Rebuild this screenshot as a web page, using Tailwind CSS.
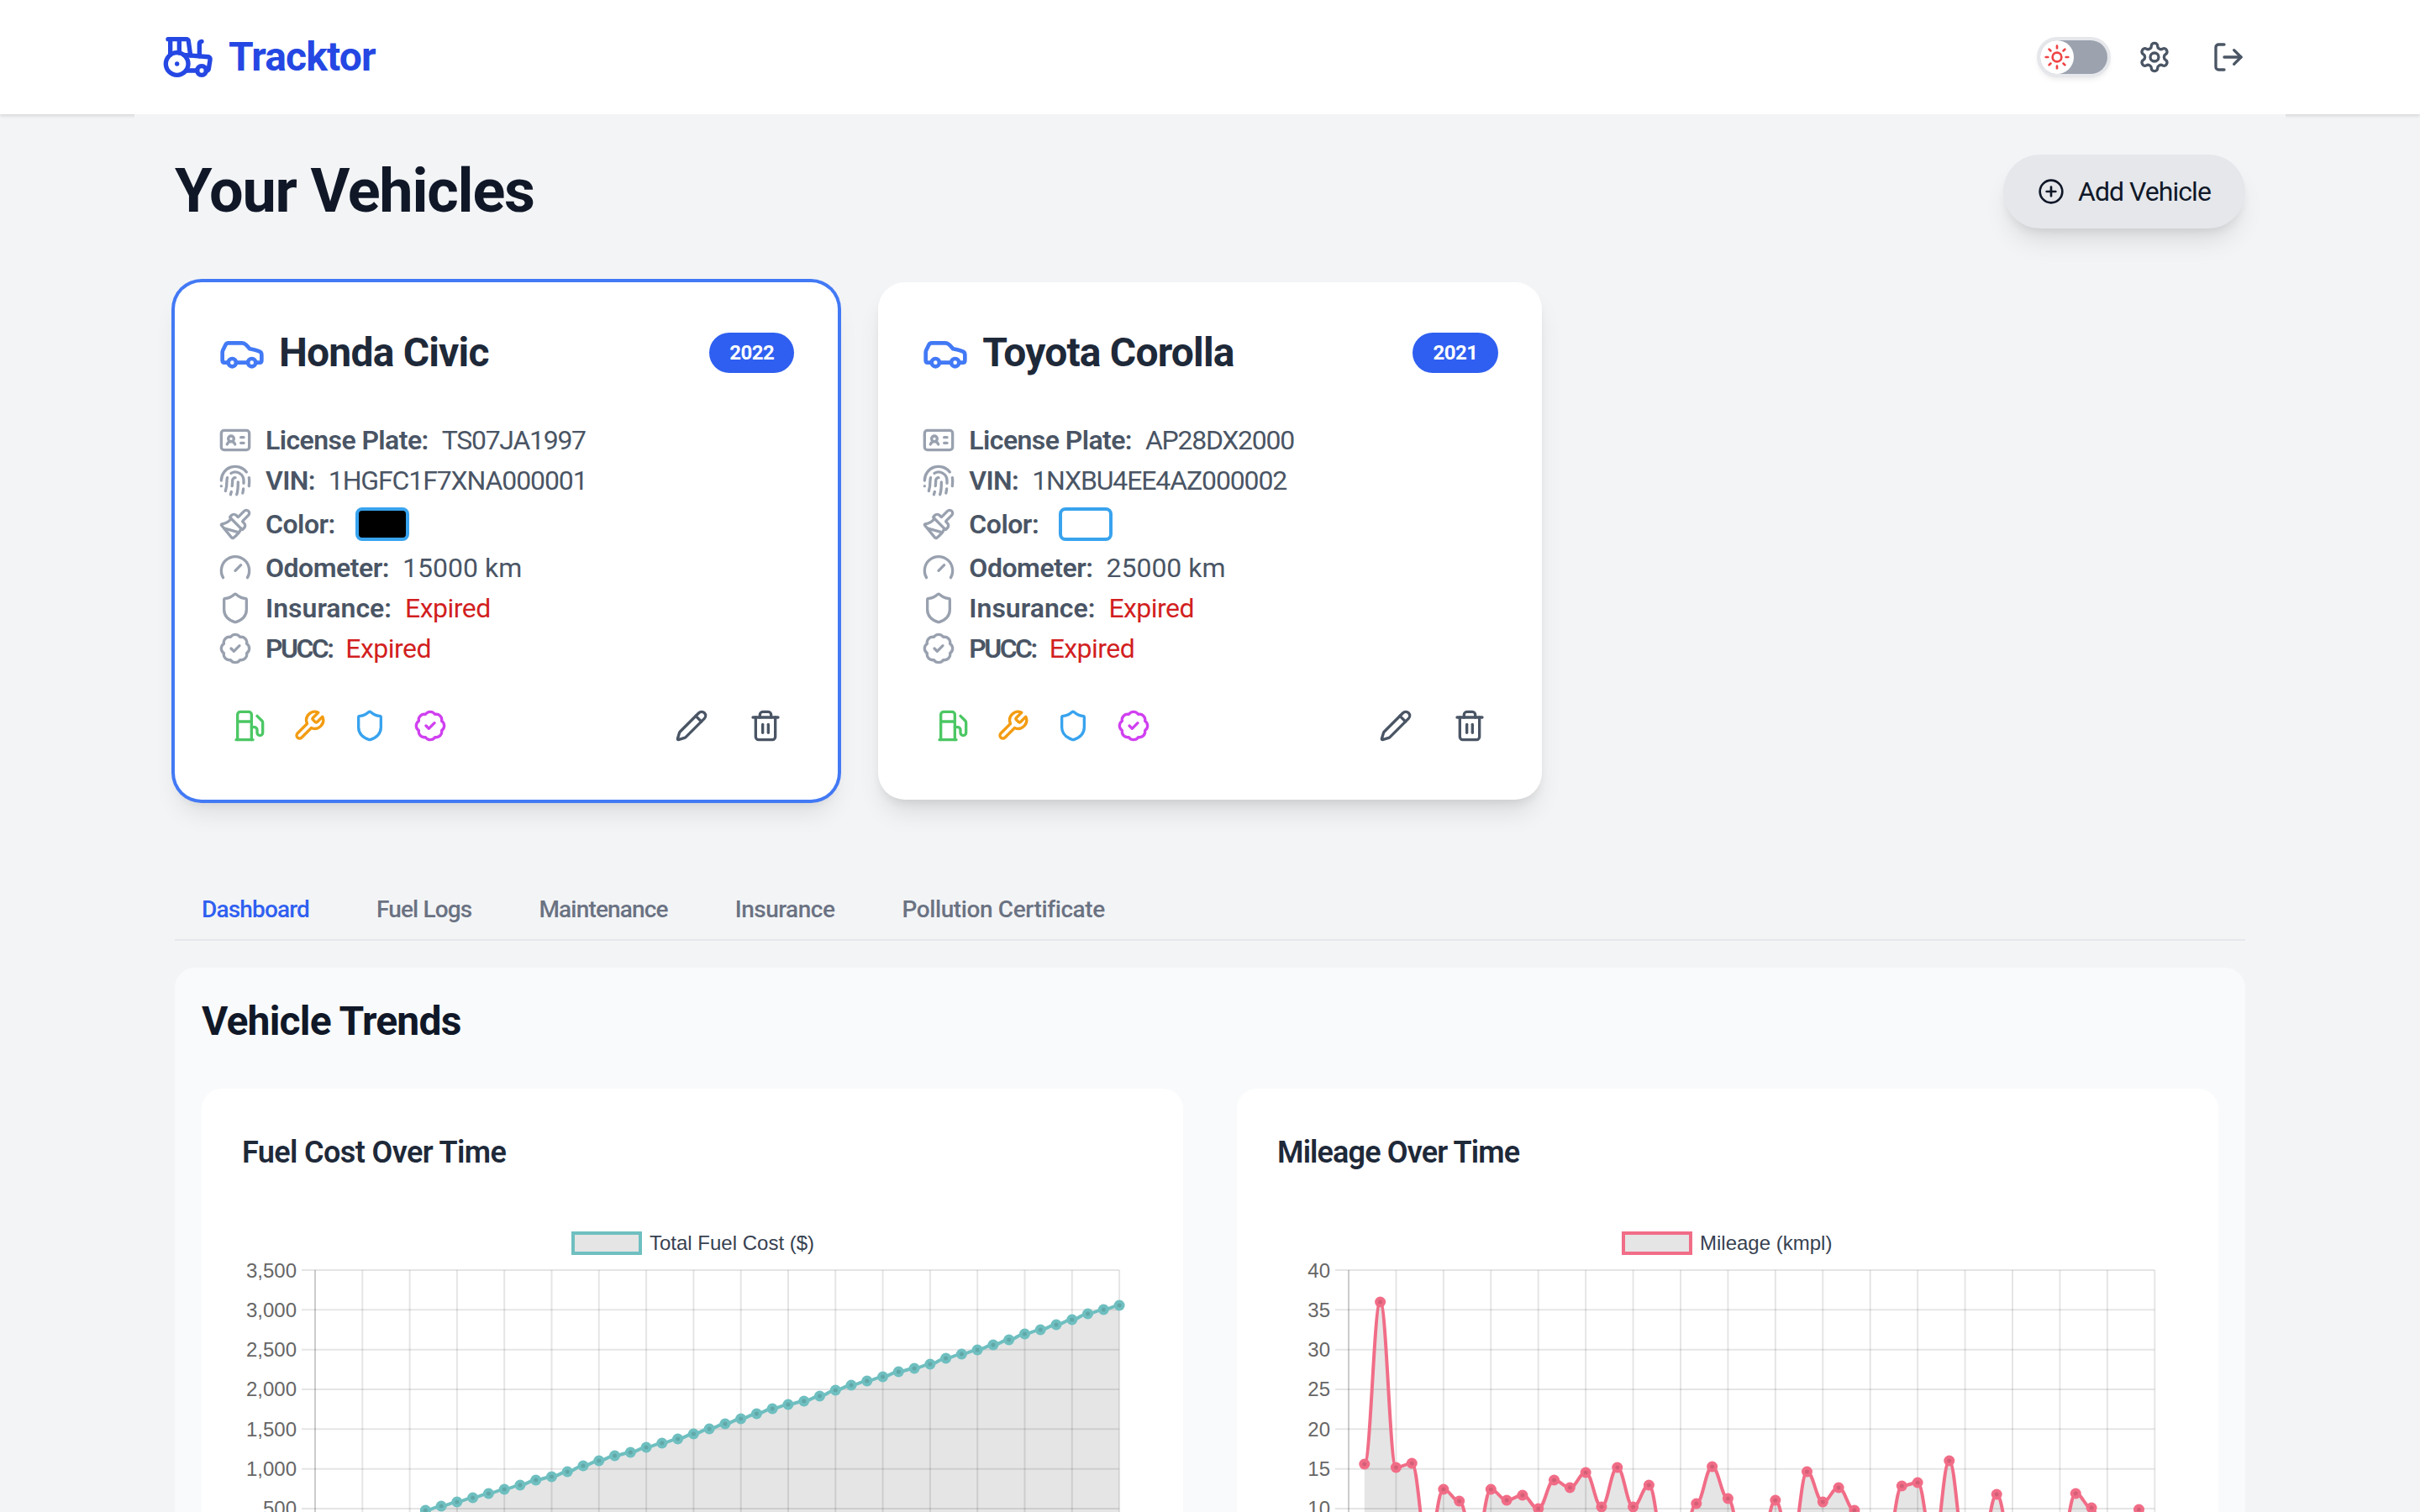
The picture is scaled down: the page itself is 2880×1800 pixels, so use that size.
<!DOCTYPE html>
<html lang="en" class="text-[32px]">

<head>
    <meta charset="UTF-8">
    <meta name="viewport" content="width=device-width, initial-scale=1.0">
    <title>Tracktor</title>
    <script src="https://cdn.jsdelivr.net/npm/@tailwindcss/browser@4"></script>
</head>

<body class="h-screen overflow-hidden bg-[#f3f4f6] font-['Roboto',sans-serif] text-gray-900">
    <!-- Header -->
    <header class="bg-white shadow-[0_2px_4px_rgba(0,0,0,0.12)]">
        <div class="mx-auto flex max-w-7xl items-center justify-between px-4 py-4 h-[136px]">
            <a href="#" class="flex items-center gap-2 text-2xl font-bold tracking-[-0.018em] text-[#2547e3]">
                <svg class="size-8" viewBox="0 0 24 24" fill="none" stroke="currentColor" stroke-width="2" stroke-linecap="round" stroke-linejoin="round"><path d="m10 11 11 .9a1 1 0 0 1 .8 1.1l-.665 4.158a1 1 0 0 1-.988.842H20"/><path d="M16 18h-5"/><path d="M18 5a1 1 0 0 0-1 1v5.573"/><path d="M3 4h8.129a1 1 0 0 1 .99.863L13 11.246"/><path d="M4 11V4"/><path d="M7 15h.01"/><path d="M8 10.1V4"/><circle cx="18" cy="18" r="2"/><circle cx="7" cy="15" r="5"/></svg>
                Tracktor
            </a>
            <div class="flex items-center gap-2">
                <div class="relative mr-[4px] h-5 w-10 rounded-full bg-[#9ca3af] ring-[4px] ring-[#e5e7eb] shadow-[0_4px_8px_rgba(0,0,0,0.15)]">
                    <div class="flex size-5 items-center justify-center rounded-full bg-white">
                        <svg class="size-4 text-[#ef4444]" viewBox="0 0 24 24" fill="none" stroke="currentColor" stroke-width="2" stroke-linecap="round" stroke-linejoin="round"><circle cx="12" cy="12" r="4"/><path d="M12 2v2"/><path d="M12 20v2"/><path d="m4.93 4.93 1.41 1.41"/><path d="m17.66 17.66 1.41 1.41"/><path d="M2 12h2"/><path d="M20 12h2"/><path d="m6.34 17.66-1.41 1.41"/><path d="m19.07 4.93-1.41 1.41"/></svg>
                    </div>
                </div>
                <button class="p-2 text-gray-600">
                    <svg class="size-5" viewBox="0 0 24 24" fill="none" stroke="currentColor" stroke-width="2" stroke-linecap="round" stroke-linejoin="round"><path d="M12.22 2h-.44a2 2 0 0 0-2 2v.18a2 2 0 0 1-1 1.73l-.43.25a2 2 0 0 1-2 0l-.15-.08a2 2 0 0 0-2.73.73l-.22.38a2 2 0 0 0 .73 2.73l.15.1a2 2 0 0 1 1 1.72v.51a2 2 0 0 1-1 1.74l-.15.09a2 2 0 0 0-.73 2.73l.22.38a2 2 0 0 0 2.73.73l.15-.08a2 2 0 0 1 2 0l.43.25a2 2 0 0 1 1 1.73V20a2 2 0 0 0 2 2h.44a2 2 0 0 0 2-2v-.18a2 2 0 0 1 1-1.73l.43-.25a2 2 0 0 1 2 0l.15.08a2 2 0 0 0 2.73-.73l.22-.39a2 2 0 0 0-.73-2.73l-.15-.08a2 2 0 0 1-1-1.74v-.5a2 2 0 0 1 1-1.74l.15-.09a2 2 0 0 0 .73-2.73l-.22-.38a2 2 0 0 0-2.73-.73l-.15.08a2 2 0 0 1-2 0l-.43-.25a2 2 0 0 1-1-1.73V4a2 2 0 0 0-2-2z"/><circle cx="12" cy="12" r="3"/></svg>
                </button>
                <button class="p-2 text-gray-600">
                    <svg class="size-5" viewBox="0 0 24 24" fill="none" stroke="currentColor" stroke-width="2" stroke-linecap="round" stroke-linejoin="round"><path d="M9 21H5a2 2 0 0 1-2-2V5a2 2 0 0 1 2-2h4"/><polyline points="16 17 21 12 16 7"/><line x1="21" x2="9" y1="12" y2="12"/></svg>
                </button>
            </div>
        </div>
    </header>

    <main class="relative mx-auto max-w-7xl bg-[#f3f4f6] p-6">
        <div class="mb-8 flex items-center justify-between">
            <h1 class="text-4xl font-bold tracking-[-0.017em] text-gray-900">Your Vehicles</h1>
            <button class="flex h-11 w-36 items-center justify-center gap-2 rounded-full bg-gray-200 text-base tracking-[-0.03em] text-gray-900 shadow-[0_20px_30px_-6px_rgba(0,0,0,0.1),0_8px_12px_-4px_rgba(0,0,0,0.08)]">
                <svg class="size-4" viewBox="0 0 24 24" fill="none" stroke="currentColor" stroke-width="2" stroke-linecap="round" stroke-linejoin="round"><circle cx="12" cy="12" r="10"/><path d="M8 12h8"/><path d="M12 8v8"/></svg>
                Add Vehicle
            </button>
        </div>

        <!-- Vehicle cards -->
        <div id="vehicles" class="mb-12 grid grid-cols-3 gap-6"></div>

        <!-- Tabs -->
        <nav class="flex h-[72px] gap-2 border-b-2 border-gray-200 text-sm font-medium tracking-[-0.03em] text-gray-500">
            <button class="px-4 text-[#2f5ff0]">Dashboard</button>
            <button class="px-4">Fuel Logs</button>
            <button class="px-4">Maintenance</button>
            <button class="px-4 tracking-[-0.018em]">Insurance</button>
            <button class="px-4 tracking-[-0.014em]">Pollution Certificate</button>
        </nav>

        <!-- Dashboard -->
        <section class="mt-4 rounded-xl bg-gray-50 p-4">
            <h2 class="mb-6 text-2xl font-bold tracking-[-0.017em] text-gray-900">Vehicle Trends</h2>
            <div class="grid grid-cols-2 gap-8">
                <div class="rounded-xl bg-white p-6">
                    <h3 class="text-lg font-semibold tracking-[-0.017em] text-gray-800">Fuel Cost Over Time</h3>
                    <svg id="fuelChart" class="block w-full" viewBox="288 1400 1072 500"></svg>
                </div>
                <div class="rounded-xl bg-white p-6">
                    <h3 class="text-lg font-semibold tracking-[-0.024em] text-gray-800">Mileage Over Time</h3>
                    <svg id="mileageChart" class="block w-full" viewBox="1520 1400 1072 500"></svg>
                </div>
            </div>
        </section>
    </main>

    <template id="cardTemplate">
        <div class="card rounded-2xl border-[4px] border-transparent bg-white p-6 shadow-[0_20px_30px_-6px_rgba(0,0,0,0.1),0_8px_12px_-4px_rgba(0,0,0,0.08)]">
            <div class="mb-6 flex h-8 items-center justify-between">
                <div class="flex items-center gap-2">
                    <svg class="size-7 text-[#4279f5]" viewBox="0 0 24 24" fill="none" stroke="currentColor" stroke-width="2" stroke-linecap="round" stroke-linejoin="round"><path d="M19 17h2c.6 0 1-.4 1-1v-3c0-.9-.7-1.7-1.5-1.9C18.7 10.6 16 10 16 10s-1.3-1.4-2.2-2.3c-.5-.4-1.1-.7-1.8-.7H5c-.6 0-1.1.4-1.4.9l-1.4 2.9A3.7 3.7 0 0 0 2 12v4c0 .6.4 1 1 1h2"/><circle cx="7" cy="17" r="2"/><path d="M9 17h6"/><circle cx="17" cy="17" r="2"/></svg>
                    <h2 class="name text-2xl font-bold tracking-[-0.017em] text-gray-800"></h2>
                </div>
                <span class="year rounded-full bg-[#2f5ff0] px-3 py-1 text-xs font-bold tracking-[-0.02em] text-white"></span>
            </div>
            <div class="text-base text-gray-600">
                <div class="flex h-6 items-center gap-2">
                    <svg class="size-5 text-gray-400" viewBox="0 0 24 24" fill="none" stroke="currentColor" stroke-width="2" stroke-linecap="round" stroke-linejoin="round"><path d="M16 10h2"/><path d="M16 14h2"/><path d="M6.17 15a3 3 0 0 1 5.66 0"/><circle cx="9" cy="11" r="2"/><rect x="2" y="5" width="20" height="14" rx="2"/></svg>
                    <span class="font-semibold tracking-[-0.018em]">License Plate:</span><span class="plate tracking-[-0.04em]"></span>
                </div>
                <div class="flex h-6 items-center gap-2">
                    <svg class="size-5 text-gray-400" viewBox="0 0 24 24" fill="none" stroke="currentColor" stroke-width="2" stroke-linecap="round" stroke-linejoin="round"><path d="M12 10a2 2 0 0 0-2 2c0 1.02-.1 2.51-.26 4"/><path d="M14 13.12c0 2.38 0 6.38-1 8.88"/><path d="M17.29 21.02c.12-.6.43-2.3.5-3.02"/><path d="M2 12a10 10 0 0 1 18-6"/><path d="M2 16h.01"/><path d="M21.8 16c.2-2 .131-5.354 0-6"/><path d="M5 19.5C5.5 18 6 15 6 12a6 6 0 0 1 .34-2"/><path d="M8.65 22c.21-.66.45-1.32.57-2"/><path d="M9 6.8a6 6 0 0 1 9 5.2v2"/></svg>
                    <span class="font-semibold tracking-[-0.02em]">VIN:</span><span class="vin tracking-[-0.035em]"></span>
                </div>
                <div class="flex h-7 items-center gap-2">
                    <svg class="size-5 text-gray-400" viewBox="0 0 24 24" fill="none" stroke="currentColor" stroke-width="2" stroke-linecap="round" stroke-linejoin="round"><path d="m14.622 17.897-10.68-2.913"/><path d="M18.376 2.622a1 1 0 1 1 3.002 3.002L17.36 9.643a.5.5 0 0 0 0 .707l.944.944a2.41 2.41 0 0 1 0 3.408l-.944.944a.5.5 0 0 1-.707 0L8.354 7.348a.5.5 0 0 1 0-.707l.944-.944a2.41 2.41 0 0 1 3.408 0l.944.944a.5.5 0 0 0 .707 0z"/><path d="M9 8c-1.804 2.71-3.97 3.46-6.583 3.948a.507.507 0 0 0-.302.819l7.32 8.883a1 1 0 0 0 1.185.204C12.735 20.405 16 16.792 16 15"/></svg>
                    <span class="font-semibold tracking-[-0.015em]">Color:</span><span class="swatch ml-[8px] h-5 w-8 rounded-[8px] border-[4px] border-[#38a3ee]"></span>
                </div>
                <div class="flex h-6 items-center gap-2">
                    <svg class="size-5 text-gray-400" viewBox="0 0 24 24" fill="none" stroke="currentColor" stroke-width="2" stroke-linecap="round" stroke-linejoin="round"><path d="m12 14 4-4"/><path d="M3.34 19a10 10 0 1 1 17.32 0"/></svg>
                    <span class="font-semibold tracking-[-0.015em]">Odometer:</span><span class="odo"></span>
                </div>
                <div class="flex h-6 items-center gap-2">
                    <svg class="size-5 text-gray-400" viewBox="0 0 24 24" fill="none" stroke="currentColor" stroke-width="2" stroke-linecap="round" stroke-linejoin="round"><path d="M20 13c0 5-3.5 7.5-7.66 8.95a1 1 0 0 1-.67-.01C7.5 20.5 4 18 4 13V6a1 1 0 0 1 1-1c2 0 4.5-1.2 6.24-2.72a1.17 1.17 0 0 1 1.52 0C14.51 3.81 17 5 19 5a1 1 0 0 1 1 1z"/></svg>
                    <span class="font-semibold">Insurance:</span><span class="tracking-[-0.017em] text-[#d21f1f]">Expired</span>
                </div>
                <div class="flex h-6 items-center gap-2">
                    <svg class="size-5 text-gray-400" viewBox="0 0 24 24" fill="none" stroke="currentColor" stroke-width="2" stroke-linecap="round" stroke-linejoin="round"><path d="M3.85 8.62a4 4 0 0 1 4.78-4.77 4 4 0 0 1 6.74 0 4 4 0 0 1 4.78 4.78 4 4 0 0 1 0 6.74 4 4 0 0 1-4.77 4.78 4 4 0 0 1-6.75 0 4 4 0 0 1-4.78-4.77 4 4 0 0 1 0-6.76Z"/><path d="m9 12 2 2 4-4"/></svg>
                    <span class="font-semibold tracking-[-0.08em]">PUCC:</span><span class="tracking-[-0.017em] text-[#d21f1f]">Expired</span>
                </div>
            </div>
            <div class="mt-4 flex items-center justify-between">
                <div class="flex">
                    <button class="p-2 text-[#4cc764]"><svg class="size-5" viewBox="0 0 24 24" fill="none" stroke="currentColor" stroke-width="2" stroke-linecap="round" stroke-linejoin="round"><line x1="3" x2="15" y1="22" y2="22"/><line x1="4" x2="14" y1="9" y2="9"/><path d="M14 22V4a2 2 0 0 0-2-2H6a2 2 0 0 0-2 2v18"/><path d="M14 13h2a2 2 0 0 1 2 2v2a2 2 0 0 0 2 2a2 2 0 0 0 2-2V9.83a2 2 0 0 0-.59-1.42L18 5"/></svg></button>
                    <button class="p-2 text-[#f39c12]"><svg class="size-5" viewBox="0 0 24 24" fill="none" stroke="currentColor" stroke-width="2" stroke-linecap="round" stroke-linejoin="round"><path d="M14.7 6.3a1 1 0 0 0 0 1.4l1.6 1.6a1 1 0 0 0 1.4 0l3.77-3.77a6 6 0 0 1-7.94 7.94l-6.91 6.91a2.12 2.12 0 0 1-3-3l6.91-6.91a6 6 0 0 1 7.94-7.94l-3.76 3.76z"/></svg></button>
                    <button class="p-2 text-[#38a3ee]"><svg class="size-5" viewBox="0 0 24 24" fill="none" stroke="currentColor" stroke-width="2" stroke-linecap="round" stroke-linejoin="round"><path d="M20 13c0 5-3.5 7.5-7.66 8.95a1 1 0 0 1-.67-.01C7.5 20.5 4 18 4 13V6a1 1 0 0 1 1-1c2 0 4.5-1.2 6.24-2.72a1.17 1.17 0 0 1 1.52 0C14.51 3.81 17 5 19 5a1 1 0 0 1 1 1z"/></svg></button>
                    <button class="p-2 text-[#d040f0]"><svg class="size-5" viewBox="0 0 24 24" fill="none" stroke="currentColor" stroke-width="2" stroke-linecap="round" stroke-linejoin="round"><path d="M3.85 8.62a4 4 0 0 1 4.78-4.77 4 4 0 0 1 6.74 0 4 4 0 0 1 4.78 4.78 4 4 0 0 1 0 6.74 4 4 0 0 1-4.77 4.78 4 4 0 0 1-6.75 0 4 4 0 0 1-4.78-4.77 4 4 0 0 1 0-6.76Z"/><path d="m9 12 2 2 4-4"/></svg></button>
                </div>
                <div class="-mr-[2px] flex gap-2 text-gray-600">
                    <button class="p-2"><svg class="size-5" viewBox="0 0 24 24" fill="none" stroke="currentColor" stroke-width="2" stroke-linecap="round" stroke-linejoin="round"><path d="M21.174 6.812a1 1 0 0 0-3.986-3.987L3.842 16.174a2 2 0 0 0-.5.83l-1.321 4.352a.5.5 0 0 0 .623.622l4.353-1.32a2 2 0 0 0 .83-.497z"/><path d="m15 5 4 4"/></svg></button>
                    <button class="p-2"><svg class="size-5" viewBox="0 0 24 24" fill="none" stroke="currentColor" stroke-width="2" stroke-linecap="round" stroke-linejoin="round"><path d="M3 6h18"/><path d="M19 6v14c0 1-1 2-2 2H7c-1 0-2-1-2-2V6"/><path d="M8 6V4c0-1 1-2 2-2h4c1 0 2 1 2 2v2"/><line x1="10" x2="10" y1="11" y2="17"/><line x1="14" x2="14" y1="11" y2="17"/></svg></button>
                </div>
            </div>
        </div>
    </template>

    <script>
        // Vehicle cards
        var vehicles = [
            { name: "Honda Civic", year: "2022", plate: "TS07JA1997", vin: "1HGFC1F7XNA000001", odo: "15000 km", color: "#000000", selected: true },
            { name: "Toyota Corolla", year: "2021", plate: "AP28DX2000", vin: "1NXBU4EE4AZ000002", odo: "25000 km", color: "#ffffff", selected: false }
        ];
        var template = document.getElementById("cardTemplate");
        vehicles.forEach(function (v) {
            var card = template.content.cloneNode(true);
            card.querySelector(".name").textContent = v.name;
            card.querySelector(".year").textContent = v.year;
            card.querySelector(".plate").textContent = v.plate;
            card.querySelector(".vin").textContent = v.vin;
            card.querySelector(".odo").textContent = v.odo;
            card.querySelector(".swatch").style.backgroundColor = v.color;
            if (v.selected) {
                card.querySelector(".card").classList.add("ring-[4px]", "ring-[#4279f5]");
            }
            document.getElementById("vehicles").appendChild(card);
        });

        // Charts, drawn the way Chart.js lays them out (page coordinates)
        var NS = "http://www.w3.org/2000/svg";
        function add(svg, tag, attrs, text) {
            var el = document.createElementNS(NS, tag);
            for (var k in attrs) el.setAttribute(k, attrs[k]);
            if (text) el.textContent = text;
            svg.appendChild(el);
            return el;
        }

        function drawChart(id, opt) {
            var svg = document.getElementById(id);
            var font = { "font-family": "Liberation Sans", "font-size": 24 };
            var bottom = 1900;

            // legend
            add(svg, "rect", { x: opt.legendX + 2, y: 1468, width: 80, height: 24, fill: "#e5e5e5", stroke: opt.color, "stroke-width": 4 });
            add(svg, "text", Object.assign({ x: opt.legendX + 93, y: 1488, fill: "#374151" }, font), opt.label);

            // grid
            for (var i = 0; i < 18; i++) {
                var gx = opt.left + i * opt.step;
                add(svg, "line", { x1: gx, x2: gx, y1: 1512, y2: bottom, stroke: i == 0 ? "rgba(0,0,0,0.2)" : "rgba(0,0,0,0.1)", "stroke-width": 2 });
            }
            opt.ticks.forEach(function (t, n) {
                var gy = 1512 + n * 47.33;
                add(svg, "line", { x1: opt.left - 16, x2: opt.right, y1: gy, y2: gy, stroke: "rgba(0,0,0,0.1)", "stroke-width": 2 });
                add(svg, "text", Object.assign({ x: opt.left - 22, y: gy + 8.5, fill: "#666666", "text-anchor": "end" }, font), t);
            });

            // data: [x on the 1/3 grid step, y in px]
            var pts = opt.points.map(function (p) {
                return [opt.left + p[0] * opt.step / 3, p[1]];
            });
            var line = "M" + pts[0][0] + " " + pts[0][1];
            for (var j = 1; j < pts.length; j++) {
                var dx = (pts[j][0] - pts[j - 1][0]) * 0.4;
                line += " C" + (pts[j - 1][0] + dx) + " " + pts[j - 1][1] + " " + (pts[j][0] - dx) + " " + pts[j][1] + " " + pts[j][0] + " " + pts[j][1];
            }
            var last = pts[pts.length - 1];
            add(svg, "path", { d: line + " L" + last[0] + " " + bottom + " L" + pts[0][0] + " " + bottom + " Z", fill: "rgba(0,0,0,0.1)" });
            add(svg, "path", { d: line, fill: "none", stroke: opt.color, "stroke-width": 4 });
            pts.forEach(function (p) {
                add(svg, "circle", { cx: p[0], cy: p[1], r: 6.5, fill: opt.color });
                add(svg, "circle", { cx: p[0], cy: p[1], r: 2.5, fill: "rgba(0,0,0,0.12)" });
            });
        }

        var fuelY = [1798, 1793, 1788, 1783, 1778, 1773, 1768, 1762, 1758, 1752, 1745, 1739, 1733, 1729, 1723, 1718, 1713, 1707, 1701, 1695, 1689, 1683, 1677, 1672, 1668, 1662, 1655, 1649, 1644, 1639, 1633, 1629, 1624, 1617, 1612, 1607, 1601, 1595, 1588, 1583, 1577, 1571, 1564, 1559, 1554];
        drawChart("fuelChart", {
            label: "Total Fuel Cost ($)", color: "#6fbfc0", legendX: 680, left: 375, right: 1332, step: 56.3,
            ticks: ["3,500", "3,000", "2,500", "2,000", "1,500", "1,000", "500"],
            points: fuelY.map(function (y, i) { return [i + 7, y]; })
        });

        // index on the x axis, y in px; the lows run below the fold
        var mileage = [[1, 1743], [2, 1550], [3, 1747], [4, 1742], [5, 1845], [6, 1773], [7, 1787], [8, 1845], [9, 1773], [10, 1786], [11, 1780], [12, 1796], [13, 1762], [14, 1771], [15, 1753], [16, 1794], [17, 1747], [18, 1794], [19, 1768], [20, 1845], [21, 1845], [22, 1790], [23, 1746], [24, 1784], [25, 1845], [26, 1845], [27, 1786], [28, 1845], [29, 1752], [30, 1788], [31, 1771], [32, 1798], [33, 1845], [34, 1845], [35, 1769], [36, 1765], [37, 1845], [38, 1739], [39, 1845], [40, 1845], [41, 1779], [42, 1845], [43, 1845], [44, 1845], [45, 1845], [46, 1778], [47, 1795], [48, 1845], [49, 1845], [50, 1797]];
        drawChart("mileageChart", {
            label: "Mileage (kmpl)", color: "#f16d87", legendX: 1930, left: 1605, right: 2564, step: 56.43,
            ticks: ["40", "35", "30", "25", "20", "15", "10"],
            points: mileage
        });
    </script>
</body>
</html>
